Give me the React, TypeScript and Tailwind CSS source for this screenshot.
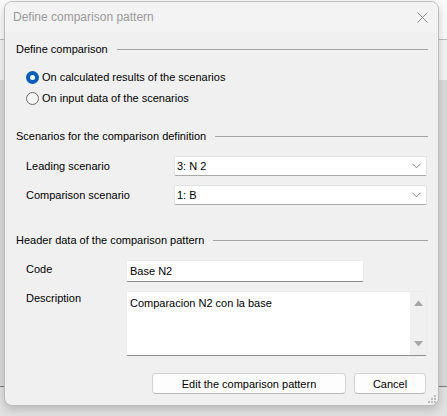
import { ReactNode } from "react";

const font = { fontFamily: '"Liberation Sans", Arial, sans-serif' };

function GroupHeader({ title, className }: { title: string; className?: string }) {
  return (
    <div className={`flex h-[16px] items-center gap-[9px] ${className ?? ""}`}>
      <span className="whitespace-nowrap text-[11px] leading-[16px] text-black">{title}</span>
      <div className="h-px flex-1 bg-[#a3a3a3]" />
    </div>
  );
}

function Radio({ checked, label, className }: { checked?: boolean; label: string; className?: string }) {
  return (
    <label className={`flex h-[20px] items-center gap-[3px] ${className ?? ""}`}>
      {checked ? (
        <span className="flex h-[13px] w-[13px] items-center justify-center rounded-full bg-[#005fb8]">
          <span className="h-[5px] w-[5px] rounded-full bg-white" />
        </span>
      ) : (
        <span className="h-[13px] w-[13px] rounded-full border border-[#6b6b6b] bg-[#f6f6f6]" />
      )}
      <span className="text-[11px] leading-[16px] text-black">{label}</span>
    </label>
  );
}

function Combo({ value }: { value: string }) {
  return (
    <div className="flex h-[20px] flex-1 items-center justify-between rounded-[2px] border border-[#e2e2e2] border-b-[#a9a9a9] bg-white pl-[2px] pr-[5px]">
      <span className="text-[11px] leading-[16px] text-black">{value}</span>
      <svg width="9" height="6" viewBox="0 0 9 6" fill="none">
        <path d="M0.5 0.8 L4.5 4.8 L8.5 0.8" stroke="#7a7a7a" strokeWidth="1" />
      </svg>
    </div>
  );
}

function Row({ label, children, className }: { label: string; children: ReactNode; className?: string }) {
  return (
    <div className={`flex items-center pl-[10px] pr-px ${className ?? ""}`}>
      <span className="w-[148px] text-[11px] leading-[16px] text-black">{label}</span>
      {children}
    </div>
  );
}

function Button({ children, className }: { children: ReactNode; className?: string }) {
  return (
    <button className={`flex h-[21px] items-center justify-center rounded-[4px] border border-[#d3d3d3] border-b-[#b8b8b8] bg-[#fdfdfd] text-[11px] leading-[16px] text-black ${className ?? ""}`}>
      {children}
    </button>
  );
}

export default function App() {
  return (
    <div
      style={font}
      className="h-[416px] w-[447px] overflow-hidden bg-[linear-gradient(to_bottom,#fafafa_0px,#fafafa_39px,#bdbdbd_39px,#bdbdbd_40px,#f3f3f3_40px,#f3f3f3_80px,#dadada_80px,#dadada_386px,#7d7d7d_386px,#7d7d7d_387px,#e2e2e2_387px)] pl-[4px] pt-px"
    >
      <div className="flex h-[405px] w-[435px] flex-col overflow-hidden rounded-[8px] border border-[#bcbcbc] bg-[#f0f0f0] shadow-[0_4px_10px_rgba(0,0,0,0.18)]">
        {/* title bar */}
        <div className="flex h-[30px] items-center justify-between bg-[#f3f3f3] pl-[8px] pr-[10px]">
          <span className="text-[12px] text-[#9a9a9a]">Define comparison pattern</span>
          <svg width="11" height="11" viewBox="0 0 11 11" fill="none">
            <path d="M0.5 0.5 L10.5 10.5 M10.5 0.5 L0.5 10.5" stroke="#8c8c8c" strokeWidth="1" />
          </svg>
        </div>

        <div className="flex flex-1 flex-col pl-[11px] pr-[10px]">
          <GroupHeader title="Define comparison" className="mt-[9px]" />
          <div className="flex flex-col pl-[10px]">
            <Radio checked label="On calculated results of the scenarios" className="mt-[10px]" />
            <Radio label="On input data of the scenarios" className="mt-px" />
          </div>

          <GroupHeader title="Scenarios for the comparison definition" className="mt-[20px]" />
          <Row label="Leading scenario" className="mt-[12px]">
            <Combo value="3: N 2" />
          </Row>
          <Row label="Comparison scenario" className="mt-[9px]">
            <Combo value="1: B" />
          </Row>

          <GroupHeader title="Header data of the comparison pattern" className="mt-[27px]" />
          <div className="mt-[12px] flex items-start pl-[10px]">
            <span className="mt-px w-[100px] text-[11px] leading-[16px] text-black">Code</span>
            <div className="flex h-[22px] w-[238px] items-center rounded-[2px] border border-[#ececec] border-b-[#8c8c8c] bg-white pl-[3px]">
              <span className="text-[11px] leading-[16px] text-black">Base N2</span>
            </div>
          </div>
          <div className="mt-[9px] flex items-start pl-[10px] pr-px">
            <span className="-mt-px w-[100px] text-[11px] leading-[16px] text-black">Description</span>
            <div className="flex h-[65px] flex-1 rounded-[2px] border border-[#ececec] border-b-[#8c8c8c] bg-white">
              <div className="flex-1 pl-[3px] pt-[3px] text-[11px] leading-[16px] text-black">Comparacion N2 con la base</div>
              <div className="flex w-[16px] flex-col items-center justify-between bg-[#f0f0f0] py-[8px]">
                <svg width="9" height="6" viewBox="0 0 9 6">
                  <path d="M0 6 L4.5 0.5 L9 6 Z" fill="#a6a6a6" />
                </svg>
                <svg width="9" height="6" viewBox="0 0 9 6">
                  <path d="M0 0 L9 0 L4.5 5.5 Z" fill="#a6a6a6" />
                </svg>
              </div>
            </div>
          </div>

          <div className="mt-[17px] flex justify-end gap-[8px] pr-[2px]">
            <Button className="w-[194px]">Edit the comparison pattern</Button>
            <Button className="w-[72px]">Cancel</Button>
          </div>

          {/* size grip */}
          <div className="mr-[-8px] mt-auto mb-[2px] flex justify-end">
            <svg width="8" height="8" viewBox="0 0 8 8">
              <rect x="6" y="0" width="2" height="2" fill="#bdbdbd" />
              <rect x="3" y="3" width="2" height="2" fill="#bdbdbd" />
              <rect x="6" y="3" width="2" height="2" fill="#bdbdbd" />
              <rect x="0" y="6" width="2" height="2" fill="#bdbdbd" />
              <rect x="3" y="6" width="2" height="2" fill="#bdbdbd" />
              <rect x="6" y="6" width="2" height="2" fill="#bdbdbd" />
            </svg>
          </div>
        </div>
      </div>
    </div>
  );
}
